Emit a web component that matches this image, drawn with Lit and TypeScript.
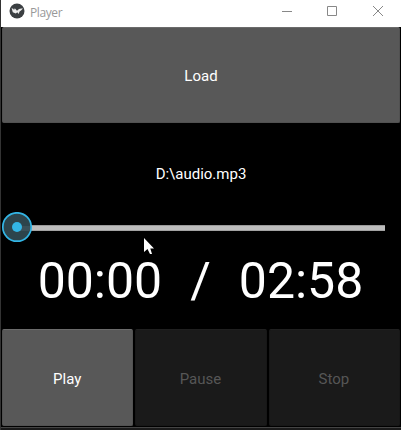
import { LitElement, html, css } from "lit";
import { customElement, property, state } from "lit/decorators.js";

@customElement("player-button")
class PlayerButton extends LitElement {
  @property() label = "";
  @property({ type: Boolean, reflect: true }) disabled = false;

  static styles = css`
    :host { display: flex; min-width: 0; }
    button {
      flex: 1; padding: var(--label-inset, 0); border: 1px solid #515151; border-top-color: #6b6b6b;
      border-radius: 2px; background: #585858; color: #fff;
      font: 15px/18px Roboto, sans-serif;
    }
    button:disabled { background: #1a1a1a; border-color: #171717; border-top-color: #202020; color: #565656; }
  `;

  render() {
    return html`<button ?disabled=${this.disabled}>${this.label}</button>`;
  }
}

@customElement("app-root")
class AppRoot extends LitElement {
  @state() private file = "D:\\audio.mp3";
  @state() private elapsed = "00:00";
  @state() private total = "02:58";

  static styles = css`
    :host {
      display: flex; flex-direction: column; box-sizing: border-box; position: relative;
      width: 401px; height: 430px; overflow: hidden; background: #000; color: #fff;
      font-family: Roboto, sans-serif; border-left: 1px solid #333;
    }
    .title { display: flex; height: 27px; margin-left: -1px; padding-left: 8px; background: #fff; border-left: 1px solid #444; box-sizing: border-box; flex: none; }
    .logo { width: 16px; height: 16px; margin-top: 3px; }
    .name { margin-left: 5px; font: 12px/25px "Open Sans", sans-serif; color: #999; flex: 1; letter-spacing: -0.4px; }
    .controls { width: 140px; height: 27px; }
    .load { height: 96px; margin: 0 1px 1px; flex: none; --label-inset: 2px 0 0; }
    .file { height: 100px; font-size: 15px; line-height: 100px; text-align: center; flex: none; }
    .slider { display: flex; align-items: center; height: 6px; margin: 1px 16px 0 15px; background: linear-gradient(#777, #bdbdbd 1px, #bdbdbd 5px, #888); flex: none; }
    .thumb { width: 31px; height: 31px; margin: -2px 0 0 -15px; flex: none; }
    .time { height: 98px; padding-right: 1px; font-size: 50px; line-height: 100px; text-align: center; white-space: pre; word-spacing: 1.6px; flex: none; }
    .actions { display: grid; grid-template-columns: repeat(3, 1fr); gap: 2px; height: 97px; margin: 0 1px; flex: none; --label-inset: 2px 1px 0 0; }
    .edge { margin: 1px 0 0 -1px; flex: 1; background: #1a1a1a; border-top: 1px solid #444; }
    .behind { position: absolute; left: -1px; top: 409px; width: 1px; height: 10px; background: #a0652b; }
    .pointer { position: absolute; left: 143px; top: 238px; width: 11px; height: 17px; }
  `;

  render() {
    return html`
      <div class="title">
        <svg class="logo" viewBox="0 0 16 16">
          <circle cx="8" cy="8" r="7.5" fill="#3b3f42" />
          <path d="M2.6 5.2 4.3 5.7 5 7 5.8 5.2 8 7.8 10 6 12.2 5.6 14 5.6 12 7.5 10.6 8.4 9.6 11 8.3 9.2 6.8 10.6 3.8 9.2Z" fill="#eee" />
        </svg>
        <div class="name">Player</div>
        <svg class="controls" viewBox="261 0 140 27" fill="none" stroke="#888">
          <path d="M282 11.5H292M327.5 6.5H336.5V15.5H327.5Z" />
          <path d="M373 6 383 16M383 6 373 16" />
        </svg>
      </div>
      <player-button class="load" label="Load"></player-button>
      <div class="file">${this.file}</div>
      <div class="slider">
        <svg class="thumb" viewBox="0 0 31 31">
          <circle cx="16" cy="15" r="14.2" fill="#2d444c" stroke="#33b5e5" stroke-width="1.7" />
          <path d="M16 14H29V19H16Z" fill="#3a5059" />
          <circle cx="16" cy="15" r="5" fill="#33b5e5" />
        </svg>
      </div>
      <div class="time">${this.elapsed}  /  ${this.total}</div>
      <div class="actions">
        <player-button label="Play"></player-button>
        <player-button label="Pause" disabled></player-button>
        <player-button label="Stop" disabled></player-button>
      </div>
      <div class="edge"></div>
      <div class="behind"></div>
      <svg class="pointer" viewBox="0 0 11 17">
        <path d="M0 0V14L3.5 11 6 16H8L6.3 10.5H10Z" fill="#fff" />
      </svg>
    `;
  }
}
